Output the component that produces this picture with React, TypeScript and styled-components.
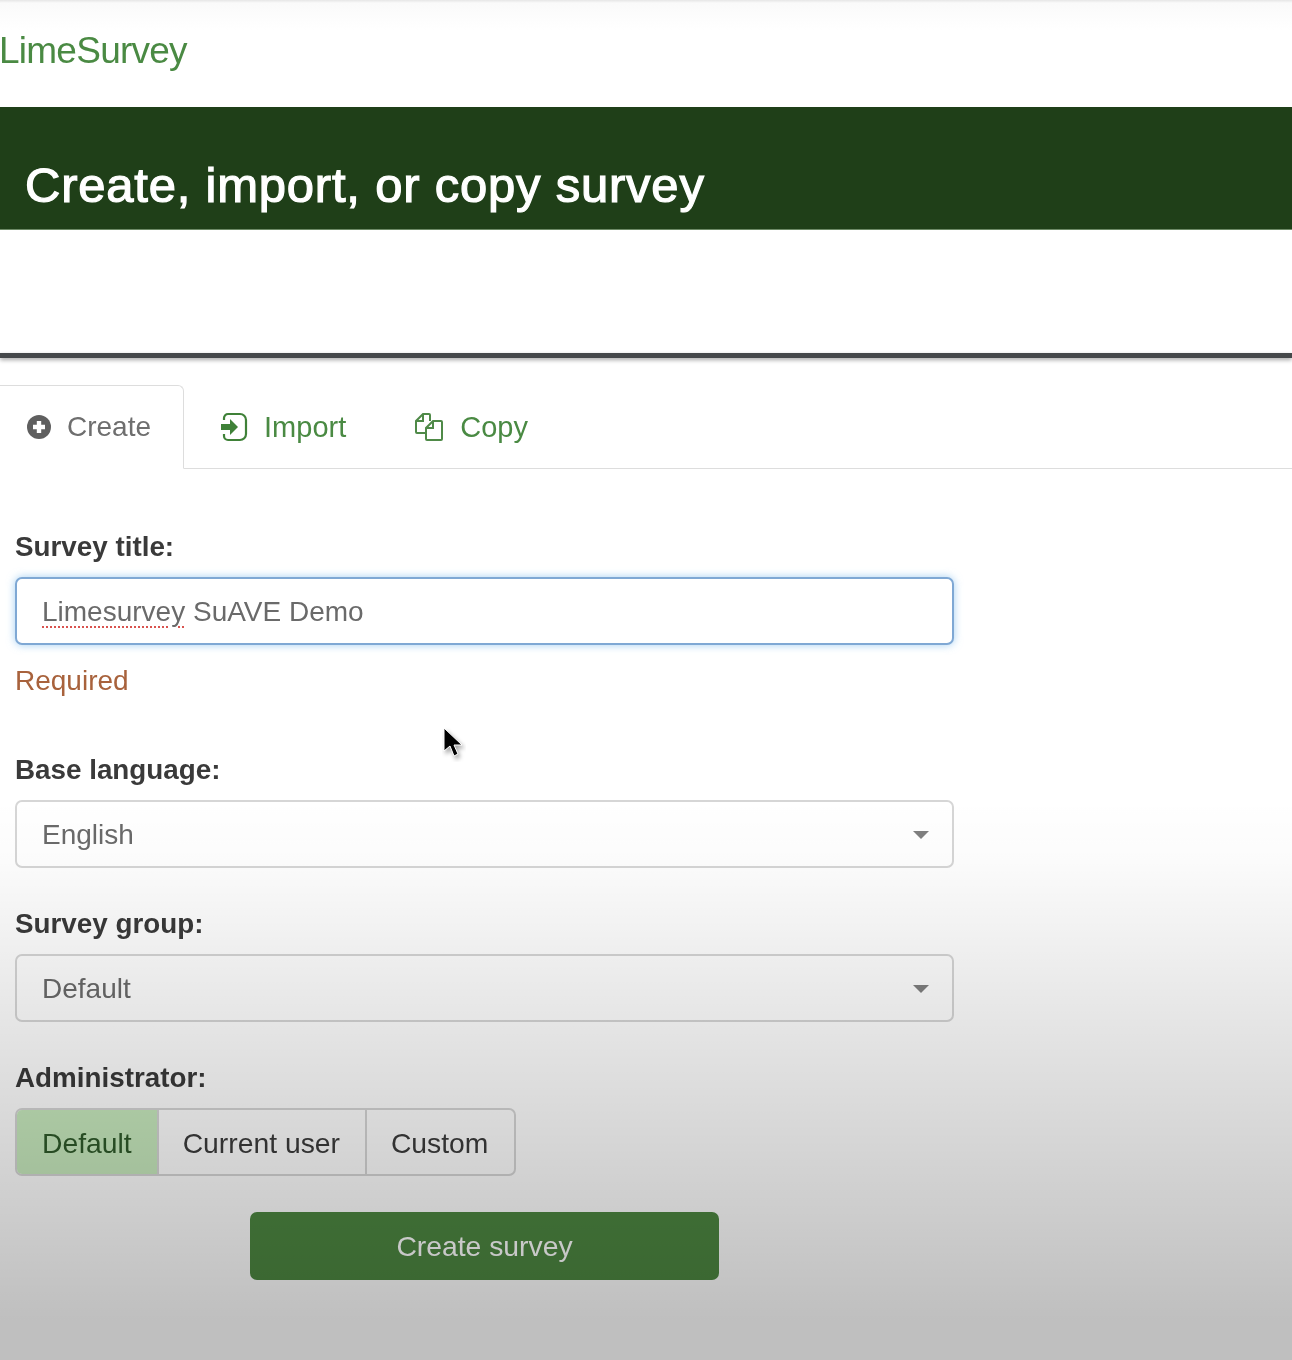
import { createGlobalStyle, styled } from "styled-components";

const GlobalStyle = createGlobalStyle`
  html, body {
    margin: 0;
    padding: 0;
    background: #fff;
  }
  body {
    font-family: "Liberation Sans", Arial, sans-serif;
    overflow: hidden;
  }
`;

const PlusIcon = () => (
  <svg width="24" height="24" viewBox="0 0 24 24">
    <circle cx="12" cy="12" r="12" fill="#5f5f5f" />
    <path d="M12 6v12M6 12h12" stroke="#fff" strokeWidth="4.4" />
  </svg>
);

const ImportIcon = () => (
  <svg width="28" height="30" viewBox="0 0 28 30" fill="none">
    <path
      d="M4 8V6a4 4 0 0 1 4-4h12a6 6 0 0 1 6 6v14a6 6 0 0 1-6 6H8a4 4 0 0 1-4-4v-2"
      stroke="#3f8138"
      strokeWidth="2.2"
    />
    <path d="M1 12h9V7l8 8-8 8v-5H1z" fill="#3f8138" />
  </svg>
);

const CopyIcon = () => (
  <svg width="30" height="30" viewBox="0 0 30 30" fill="none" stroke="#4f8a48" strokeWidth="2">
    <path d="M12 21H3a1 1 0 0 1-1-1V9l7-7h6a1 1 0 0 1 1 1v6" />
    <path d="M2 9h7V2" />
    <path d="M12 27V16l7-7h8a1 1 0 0 1 1 1v17a1 1 0 0 1-1 1H13a1 1 0 0 1-1-1z" />
    <path d="M12 16h7V9" />
  </svg>
);

const Caret = () => (
  <svg width="16" height="8" viewBox="0 0 16 8">
    <path d="M0 0h16L8 8z" fill="#808080" />
  </svg>
);

const Cursor = () => (
  <svg width="24" height="36" viewBox="0 0 24 36">
    <path
      d="M2 2v23l6-5 4 10 4-2-4-9h8z"
      fill="#000"
      stroke="#fff"
      strokeWidth="1"
      style={{ filter: "drop-shadow(2px 3px 2px rgba(0,0,0,.35))" }}
    />
  </svg>
);

const App = () => {
  return (
    <Page>
      <GlobalStyle />
      <TopBar>
        <Logo>LimeSurvey</Logo>
      </TopBar>
      <Banner>
        <h1>Create, import, or copy survey</h1>
      </Banner>
      <Spacer />
      <Divider />

      <Tabs>
        <Tab $active>
          <PlusIcon />
          Create
        </Tab>
        <Tab>
          <ImportIcon />
          Import
        </Tab>
        <Tab>
          <CopyIcon />
          Copy
        </Tab>
      </Tabs>

      <Form>
        <Field $gap={55}>
          <Label>Survey title:</Label>
          <Control $focused>
            <span>
              <Misspelled>Limesurvey</Misspelled> SuAVE Demo
            </span>
          </Control>
          <Hint>Required</Hint>
        </Field>

        <Field>
          <Label>Base language:</Label>
          <Control>
            English
            <Caret />
          </Control>
        </Field>

        <Field>
          <Label>Survey group:</Label>
          <Control>
            Default
            <Caret />
          </Control>
        </Field>

        <Field $gap={36}>
          <Label>Administrator:</Label>
          <ButtonGroup>
            <GroupButton $active>Default</GroupButton>
            <GroupButton>Current user</GroupButton>
            <GroupButton>Custom</GroupButton>
          </ButtonGroup>
        </Field>

        <Submit type="button">Create survey</Submit>
      </Form>

      <CursorSpot>
        <Cursor />
      </CursorSpot>
      <Fade />
    </Page>
  );
};

export default App;

const Page = styled.div`
  position: relative;
  width: 1292px;
  height: 1360px;
  overflow: hidden;
  background: #fff;
  color: #333;
  filter: blur(0.5px);
`;

// the video fade that darkens the lower half of the frame
const Fade = styled.div`
  position: absolute;
  inset: 0;
  pointer-events: none;
  background: linear-gradient(
    to bottom,
    rgba(0, 0, 0, 0) 800px,
    rgba(0, 0, 0, 0.015) 860px,
    rgba(0, 0, 0, 0.09) 1000px,
    rgba(0, 0, 0, 0.12) 1060px,
    rgba(0, 0, 0, 0.25) 1320px,
    rgba(0, 0, 0, 0.25) 1360px
  );
`;

const TopBar = styled.div`
  height: 107px;
  box-sizing: border-box;
  padding-top: 28px;
  background: linear-gradient(to bottom, #e6e6e6 0, #fafafa 3px, #fff 30px);
`;

const Logo = styled.div`
  margin-left: -1px;
  color: #4a8a43;
  font-size: 37px;
  line-height: 46px;
  letter-spacing: -0.75px;
`;

const Banner = styled.div`
  height: 123px;
  box-sizing: border-box;
  padding: 47px 0 0 25px;
  background: #1f3f18;
  border-bottom: 1px solid #6d8a66;

  h1 {
    margin: 0;
    color: #fff;
    font-size: 49px;
    font-weight: 400;
    line-height: 62px;
    letter-spacing: 0.78px;
    -webkit-text-stroke: 1.2px #fff;
  }
`;

const Spacer = styled.div`
  height: 123px;
`;

const Divider = styled.div`
  height: 5px;
  background: #45484a;
  box-shadow: 0 2px 4px rgba(0, 0, 0, 0.35);
`;

const Tabs = styled.div`
  display: flex;
  height: 83px;
  margin-top: 27px;
  border-bottom: 1px solid #ddd;
  box-sizing: content-box;
`;

const Tab = styled.div<{ $active?: boolean }>`
  display: flex;
  align-items: center;
  gap: 16px;
  height: 84px;
  box-sizing: border-box;
  padding: ${(props) => (props.$active ? "0 32px 0 27px" : "0 32px 0 36px")};
  color: ${(props) => (props.$active ? "#6e6e6e" : "#4a8a43")};
  font-size: ${(props) => (props.$active ? 28 : 29)}px;
  background: ${(props) => (props.$active ? "#fff" : "transparent")};
  border: ${(props) => (props.$active ? "1px solid #ddd" : "none")};
  border-left: none;
  border-bottom: ${(props) => (props.$active ? "1px solid #fff" : "none")};
  border-radius: 0 6px 0 0;
`;

const Form = styled.div`
  display: flex;
  flex-direction: column;
  width: 939px;
  margin: 61px 0 0 15px;
`;

const Field = styled.div<{ $gap?: number }>`
  display: flex;
  flex-direction: column;
  margin-bottom: ${(props) => props.$gap ?? 39}px;
`;

const Label = styled.div`
  margin-bottom: 13px;
  color: #3a3a3a;
  font-size: 27.8px;
  font-weight: 700;
  line-height: 34px;
`;

const Control = styled.div<{ $focused?: boolean }>`
  display: flex;
  align-items: center;
  justify-content: space-between;
  height: 68px;
  box-sizing: border-box;
  padding: 2px 23px 0 25px;
  color: #6a6a6a;
  font-size: 28px;
  background: #fff;
  border: 2px solid ${(props) => (props.$focused ? "#7fa8d4" : "#d6d6d6")};
  border-radius: 7px;
  box-shadow: ${(props) => (props.$focused ? "0 0 9px rgba(102, 175, 233, 0.6)" : "none")};
`;

const Misspelled = styled.span`
  text-decoration: underline dotted #d9534f;
  text-decoration-thickness: 2px;
  text-underline-offset: 5px;
`;

const Hint = styled.div`
  margin-top: 19px;
  color: #a8623c;
  font-size: 28px;
  line-height: 34px;
`;

const ButtonGroup = styled.div`
  display: flex;
  align-self: flex-start;
  height: 68px;
  box-sizing: border-box;
  background: #fff;
  border: 2px solid #d6d6d6;
  border-radius: 7px;
  overflow: hidden;
`;

const GroupButton = styled.div<{ $active?: boolean }>`
  display: flex;
  align-items: center;
  padding: 2px 25px 0 24px;
  color: ${(props) => (props.$active ? "#2f5a2a" : "#3c3c3c")};
  font-size: 28.3px;
  background: ${(props) => (props.$active ? "#c8eabe" : "transparent")};
  border-right: 2px solid #d6d6d6;

  &:first-child {
    padding-left: 25px;
  }

  &:last-child {
    padding-right: 26px;
    border-right: none;
  }
`;

const Submit = styled.button`
  align-self: center;
  width: 469px;
  height: 68px;
  padding: 0;
  color: #fff;
  font-family: inherit;
  font-size: 28.3px;
  background: #4d8741;
  border: none;
  border-radius: 7px;
`;

const CursorSpot = styled.div`
  position: absolute;
  left: 442px;
  top: 726px;
`;
